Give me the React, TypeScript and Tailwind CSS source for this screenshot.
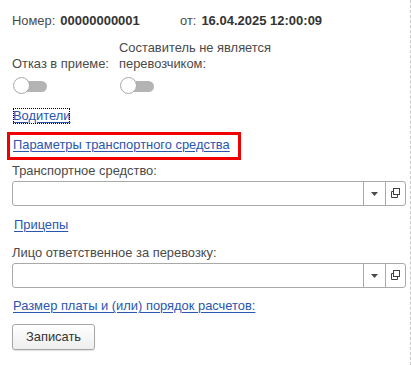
import React from "react";

function Toggle() {
  return (
    <div className="relative w-[35px] h-[17px]">
      <div className="absolute left-[10px] top-[3.5px] w-[24px] h-[11px] rounded-r-full bg-[#b4b4b4]" />
      <div className="absolute left-0 top-0 w-[17px] h-[17px] rounded-full bg-white border border-[#a8a8a8]" />
    </div>
  );
}

function OpenIcon() {
  return (
    <svg width="11" height="11" viewBox="0 0 11 11" fill="none" stroke="#404040" strokeWidth="1">
      <rect x="3.5" y="0.5" width="6" height="6" />
      <path d="M3.5 3.5 H1.5 V9.5 H7.5 V6.5" />
    </svg>
  );
}

function SelectField() {
  return (
    <div className="flex h-[25px] w-[394px] rounded-[3px] border border-[#a9a9a9] bg-white">
      <div className="flex-1" />
      <div className="flex w-[22px] items-center justify-center border-l border-[#a9a9a9]">
        <svg width="7" height="4" viewBox="0 0 7 4">
          <path d="M0 0 H7 L3.5 4 Z" fill="#4a4a4a" />
        </svg>
      </div>
      <div className="flex w-[20px] items-center justify-center border-l border-[#a9a9a9]">
        <OpenIcon />
      </div>
    </div>
  );
}

const linkCls = "text-[#2a56b0] underline underline-offset-[2px] decoration-1";

export default function App() {
  return (
    <div
      className="w-[411px] h-[365px] bg-white border-r border-dashed border-[#c8c8c8] pl-[12px] text-[12.9px] leading-[16px] text-[#4a4a4a] overflow-hidden"
      style={{ fontFamily: '"Liberation Sans", Arial, sans-serif' }}
    >
      <div className="mt-[13px] flex h-[16px] text-[13px]">
        <div className="w-[168px] flex">
          <span className="text-[12.9px]">Номер:</span>
          <span className="ml-[5px] font-bold text-[#333]">00000000001</span>
        </div>
        <span className="text-[12.9px]">от:</span>
        <span className="ml-[5px] font-bold text-[#333]">16.04.2025 12:00:09</span>
      </div>

      <div className="mt-[11px] flex">
        <div className="w-[107px] flex flex-col">
          <div className="h-[32px] flex items-end">Отказ в приеме:</div>
          <div className="mt-[5px] ml-[1px]">
            <Toggle />
          </div>
        </div>
        <div className="flex flex-col">
          <div className="h-[32px] flex items-end">
            Составитель не является
            <br />
            перевозчиком:
          </div>
          <div className="mt-[5px] ml-[1px]">
            <Toggle />
          </div>
        </div>
      </div>

      <div className="mt-[14px] ml-[1px]">
        <span className={"inline-block outline-1 outline-dotted outline-black -outline-offset-1 " + linkCls}>
          Водители
        </span>
      </div>

      <div className="mt-[8px] -ml-[5px]">
        <div className="inline-block border-[3px] border-[#f00000] pt-[1px] pb-[3px] pl-[3px] pr-[8px] leading-[18px]">
          <span className={linkCls}>Параметры транспортного средства</span>
        </div>
      </div>

      <div className="mt-[3px]">Транспортное средство:</div>
      <div className="mt-[2px]">
        <SelectField />
      </div>

      <div className="mt-[11px] ml-[2px]">
        <span className={linkCls}>Прицепы</span>
      </div>

      <div className="mt-[12px]">Лицо ответственное за перевозку:</div>
      <div className="mt-[2px]">
        <SelectField />
      </div>

      <div className="mt-[10px] ml-[1px]">
        <span className={linkCls}>Размер платы и (или) порядок расчетов:</span>
      </div>

      <div className="mt-[10px]">
        <button className="h-[26px] w-[83px] rounded-[3px] border border-[#a6a6a6] bg-gradient-to-b from-white to-[#eeeeee] text-[#333] shadow-[0_1px_1px_rgba(0,0,0,0.12)]">
          Записать
        </button>
      </div>
    </div>
  );
}
